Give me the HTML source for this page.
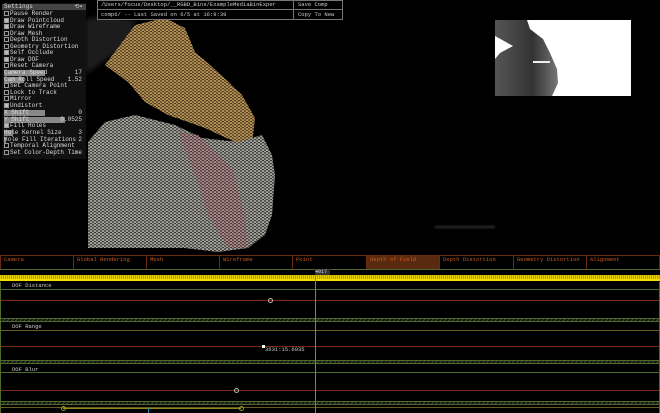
<!DOCTYPE html>
<html><head><style>
*{margin:0;padding:0;box-sizing:border-box}
body{width:660px;height:413px;background:#000;position:relative;overflow:hidden;font-family:"Liberation Mono",monospace;font-size:6px;color:#ddd}
.a{position:absolute}
#panel{left:2px;top:3px;width:84px;height:156px;background:rgba(20,20,20,.85)}
.row{position:absolute;left:2px;width:82px;height:6px;line-height:6px;white-space:pre}
.cb{display:inline-block;width:5px;height:5px;border:1px solid #999;vertical-align:top;margin-right:1px;position:relative}
.cb.on{background:#bbb}
.sl{position:absolute;left:0;top:0;height:6px;background:#888}
.val{position:absolute;right:4px;top:0}
.tab{position:absolute;top:256px;height:13px;border-left:1px solid #6a2a10;color:#c85a20;font-size:5.5px;padding-left:3px;line-height:8px}
.hdr{position:absolute;left:12px;color:#ccc;font-size:5.5px}
.gl{position:absolute;left:0;width:660px;height:1px;background:#4f6a2a}
.rl{position:absolute;left:0;width:660px;height:1px;background:#7a2a10}
.hatch{position:absolute;left:0;width:660px;height:4px;background:repeating-linear-gradient(135deg,#3a4a2a 0 1px,#111 1px 3px);border-top:1px solid #4f6a2a;border-bottom:1px solid #4f6a2a}
.circ{position:absolute;width:5px;height:5px;border:1px solid #bbb;border-radius:50%}
</style></head><body>
<svg class="a" style="left:85px;top:15px" width="195" height="240" viewBox="0 0 195 240">
<defs>
<pattern id="m" width="4" height="3" patternUnits="userSpaceOnUse"><rect width="4" height="3" fill="#2a2a2a"/><path d="M0 1.5L2 0L4 1.5L2 3Z" fill="none" stroke="#a8a8a0" stroke-width=".8"/></pattern>
<pattern id="y" width="4" height="3" patternUnits="userSpaceOnUse"><rect width="4" height="3" fill="#3a2810"/><path d="M0 1.5L2 0L4 1.5L2 3Z" fill="none" stroke="#b8955a" stroke-width=".9"/></pattern>
<pattern id="p" width="4" height="3" patternUnits="userSpaceOnUse"><rect width="4" height="3" fill="#3a2a2a"/><path d="M0 1.5L2 0L4 1.5L2 3Z" fill="none" stroke="#b09090" stroke-width=".8"/></pattern>
<filter id="b"><feGaussianBlur stdDeviation="3"/></filter>
</defs>
<path d="M0 5L20 0L50 5L45 30L20 45L0 60Z" fill="#1a1a1a" filter="url(#b)"/>
<path d="M20 50L50 10L80 3L100 13L110 37L133 57L157 80L170 103L167 130L150 127L120 113L83 100L60 87L43 67Z" fill="url(#y)"/>
<path d="M3 127L20 107L50 100L90 110L117 123L153 127L177 120L187 140L190 160L187 200L180 220L163 233L133 237L100 233L3 233Z" fill="url(#m)"/>
<path d="M93 117L113 120L147 153L160 200L163 233L143 233L123 200L110 160Z" fill="url(#p)"/>
</svg>
<div class="a" style="left:495px;top:20px;width:136px;height:76px;background:#fff;overflow:hidden">
<svg width="136" height="76"><defs><linearGradient id="g" x1="0" x2="1"><stop offset="0" stop-color="#555"/><stop offset=".6" stop-color="#333"/><stop offset="1" stop-color="#777"/></linearGradient></defs><path d="M0 0L32 0L35 9L48 19L55 33L62 49L63 63L57 76L0 76L0 39L5 33L18 26L0 16Z" fill="url(#g)"/><rect x="38" y="41" width="17" height="2" fill="#eee"/></svg>
</div>
<div class="a" style="left:97px;top:0;width:246px;height:20px;border:1px solid #777;background:#000"></div>
<div class="a" style="left:97px;top:9px;width:246px;height:1px;background:#777"></div>
<div class="a" style="left:293px;top:0;width:1px;height:20px;background:#777"></div>
<div class="a" style="left:101px;top:1px;color:#ccc;font-size:5.5px">/Users/focus/Desktop/__RGBD_Bins/ExampleMediaBinExper</div>
<div class="a" style="left:101px;top:11px;color:#ccc;font-size:5.5px">comp6/ -- Last Saved on 6/5 at 16:9:39</div>
<div class="a" style="left:298px;top:1px;color:#ccc;font-size:5.5px">Save Comp</div>
<div class="a" style="left:298px;top:11px;color:#ccc;font-size:5.5px">Copy To New</div>
<div class="a" style="left:435px;top:226px;width:60px;height:2px;background:#333;filter:blur(1px)"></div>

<div id="panel" class="a">
<div class="row" style="top:1px;background:#444;left:0;width:84px;padding-left:2px">Settings<span style="position:absolute;right:3px">⟲▪</span></div>
<div class="row" style="top:8px"><span class="cb"></span>Pause Render</div>
<div class="row" style="top:14.5px"><span class="cb on"></span>Draw Pointcloud</div>
<div class="row" style="top:21px"><span class="cb on"></span>Draw Wireframe</div>
<div class="row" style="top:27.5px"><span class="cb"></span>Draw Mesh</div>
<div class="row" style="top:34px"><span class="cb"></span>Depth Distortion</div>
<div class="row" style="top:40.5px"><span class="cb"></span>Geometry Distortion</div>
<div class="row" style="top:47px"><span class="cb on"></span>Self Occlude</div>
<div class="row" style="top:53.5px"><span class="cb on"></span>Draw DOF</div>
<div class="row" style="top:60px"><span class="cb"></span>Reset Camera</div>
<div class="row" style="top:67px"><div class="sl" style="width:41px"></div><span style="position:relative">Camera Speed</span><span class="val">17</span></div>
<div class="row" style="top:73.5px"><div class="sl" style="width:20px"></div><span style="position:relative">Cam Roll Speed</span><span class="val">1.52</span></div>
<div class="row" style="top:80px"><span class="cb"></span>Set Camera Point</div>
<div class="row" style="top:86.5px"><span class="cb"></span>Lock to Track</div>
<div class="row" style="top:93px"><span class="cb"></span>Mirror</div>
<div class="row" style="top:99.5px"><span class="cb on"></span>Undistort</div>
<div class="row" style="top:107px"><div class="sl" style="width:41px"></div><span style="position:relative">X Shift</span><span class="val">0</span></div>
<div class="row" style="top:113.5px"><div class="sl" style="width:61px"></div><span style="position:relative">Y Shift</span><span class="val">0.0525</span></div>
<div class="row" style="top:120px"><span class="cb on"></span>Fill Holes</div>
<div class="row" style="top:127px"><div class="sl" style="width:9px"></div><span style="position:relative">Hole Kernel Size</span><span class="val">3</span></div>
<div class="row" style="top:133.5px"><div class="sl" style="width:2px"></div><span style="position:relative">Hole Fill Iterations</span><span class="val">2</span></div>
<div class="row" style="top:140px"><span class="cb"></span>Temporal Alignment</div>
<div class="row" style="top:146.5px"><span class="cb"></span>Set Color-Depth Time</div>
</div>

<div class="a" style="left:0;top:255px;width:660px;height:1px;background:#6a2a10"></div>
<div class="tab" style="left:0">Camera</div>
<div class="tab" style="left:73px">Global Rendering</div>
<div class="tab" style="left:146px">Mesh</div>
<div class="tab" style="left:219px">Wireframe</div>
<div class="tab" style="left:292px">Point</div>
<div class="tab" style="left:366px;width:73px;background:#5a2a10">Depth of Field</div>
<div class="tab" style="left:439px">Depth Distortion</div>
<div class="tab" style="left:513px">Geometry Distortion</div>
<div class="tab" style="left:586px">Alignment</div>
<div class="a" style="left:659px;top:256px;width:1px;height:13px;background:#6a2a10"></div>
<div class="gl" style="top:269px"></div>
<div class="a" style="left:315px;top:269px;width:15px;height:6px;background:#333;color:#ddd;font-size:5px;line-height:6px">4017</div>
<div class="a" style="left:0;top:275px;width:660px;height:6px;background:repeating-linear-gradient(90deg,#e8d000 0 1px,#b8a000 1px 2px);border-bottom:2px solid #f0e000"></div>
<div class="hdr" style="top:282px">DOF Distance</div>
<div class="gl" style="top:289px"></div>
<div class="rl" style="top:300px"></div>
<div class="circ" style="left:268px;top:298px"></div>
<div class="hatch" style="top:318px"></div>
<div class="hdr" style="top:323px">DOF Range</div>
<div class="gl" style="top:330px;background:#6a5a20"></div>
<div class="rl" style="top:346px"></div>
<div class="a" style="left:262px;top:345px;width:3px;height:3px;background:#fff"></div>
<div class="a" style="left:265px;top:346px;color:#ccc;font-size:5.5px">3631:15.6035</div>
<div class="hatch" style="top:360px"></div>
<div class="hdr" style="top:366px">DOF Blur</div>
<div class="gl" style="top:372px"></div>
<div class="rl" style="top:390px"></div>
<div class="circ" style="left:234px;top:388px"></div>
<div class="hatch" style="top:401px"></div>
<div class="a" style="left:0;top:407px;width:660px;height:1px;background:#6a5a20"></div>
<div class="a" style="left:63px;top:408px;width:178px;height:1px;background:#8a8a20"></div>
<div class="circ" style="left:61px;top:406px;border-color:#9a9a20"></div>
<div class="circ" style="left:239px;top:406px;border-color:#9a9a20"></div>
<div class="a" style="left:148px;top:408px;width:1px;height:5px;background:#2a8aa0"></div>
<div class="a" style="left:315px;top:275px;width:1px;height:138px;background:#7a8a40"></div>
<div class="a" style="left:0;top:282px;width:1px;height:131px;background:#4f6a2a"></div>
<div class="a" style="left:659px;top:282px;width:1px;height:131px;background:#4f6a2a"></div>
</body></html>
